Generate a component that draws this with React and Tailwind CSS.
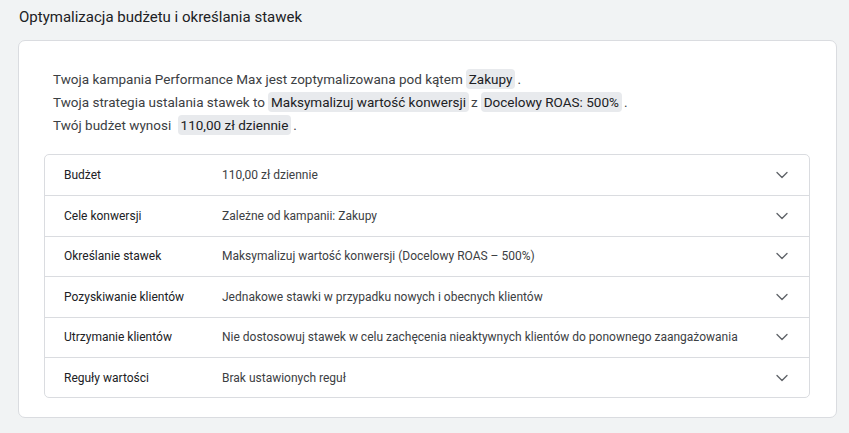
import { ChevronDown } from 'lucide-react';

const rows = [
    ['Budżet', '110,00 zł dziennie'],
    ['Cele konwersji', 'Zależne od kampanii: Zakupy'],
    ['Określanie stawek', 'Maksymalizuj wartość konwersji (Docelowy ROAS – 500%)'],
    ['Pozyskiwanie klientów', 'Jednakowe stawki w przypadku nowych i obecnych klientów'],
    ['Utrzymanie klientów', 'Nie dostosowuj stawek w celu zachęcenia nieaktywnych klientów do ponownego zaangażowania'],
    ['Reguły wartości', 'Brak ustawionych reguł'],
];

function Chip({ children }) {
    return (
        <span className="inline-block rounded-[4px] bg-[#e8eaed] px-[3px] leading-[20px] text-[#202124] ml-[3px] mr-[2px]">
            {children}
        </span>
    );
}

export default function App() {
    return (
        <div className="min-h-screen bg-[#f1f3f4] font-['Roboto',sans-serif] text-[#202124]">
            <div className="pl-[18px] pr-[12px] pt-[6px] pb-[15px]">
                <h1 className="text-[15px] leading-[22px] pl-[1px] mb-[12px]">Optymalizacja budżetu i określania stawek</h1>
                <div className="rounded-[7px] border border-[#dadce0] bg-white pl-[25px] pr-[26px] pt-[27px] pb-[19px]">
                    <div className="pl-[9px] text-[13.5px] leading-[23px] text-[#3c4043]">
                        <p>Twoja kampania Performance Max jest zoptymalizowana pod kątem<Chip>Zakupy</Chip>.</p>
                        <p>
                            Twoja strategia ustalania stawek to<Chip>Maksymalizuj wartość konwersji</Chip>z<Chip>Docelowy ROAS: 500%</Chip>.
                        </p>
                        <p>Twój budżet wynosi <Chip>110,00 zł dziennie</Chip>.</p>
                    </div>
                    <div className="mt-[17px] rounded-[5px] border border-[#dadce0]">
                        {rows.map(([label, value], i) => (
                            <div
                                key={label}
                                className={`flex h-[40.4px] items-center pl-[19px] pr-[17px] text-[12px] ${i > 0 ? 'border-t border-[#dadce0]' : ''}`}
                            >
                                <div className="w-[158px] text-[#202124]">{label}</div>
                                <div className="flex-1 text-[#3c4043]">{value}</div>
                                <ChevronDown className="h-[20px] w-[20px] text-[#5f6368]" strokeWidth={1.6} />
                            </div>
                        ))}
                    </div>
                </div>
            </div>
        </div>
    );
}
